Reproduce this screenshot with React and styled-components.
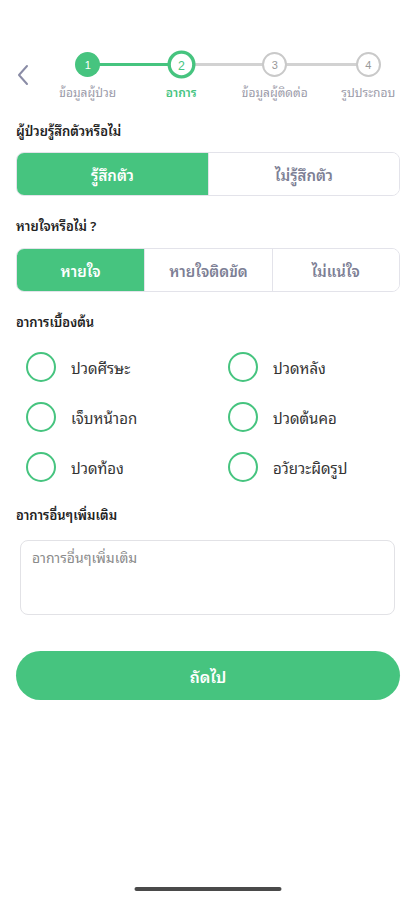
import React, { useState } from "react";
import styled, { createGlobalStyle } from "styled-components";

const GREEN = "#46c47f";
const FONT = `"Noto Sans Thai Looped", "Loma", "Garuda", "Norasi", "Noto Sans Thai", "Noto Sans", sans-serif`;

const Global = createGlobalStyle`
  html, body { margin: 0; padding: 0; background: #fff; }
  body { font-family: ${FONT}; color: #222; }
  * { box-sizing: border-box; }
`;

const Screen = styled.div`
  width: 415px;
  height: 900px;
  background: #fff;
  display: flex;
  flex-direction: column;
  padding: 0 15px 0 16px;
  position: relative;
`;

const Header = styled.div`
  display: flex;
  align-items: flex-start;
  padding-top: 52px;
  height: 108px;
  margin-right: -15px;
`;

const Back = styled.button`
  border: 0;
  background: none;
  padding: 0;
  width: 25px;
  flex-shrink: 0;
  margin-top: 12px;
  display: flex;
  cursor: pointer;
`;

const Steps = styled.div`
  flex: 1;
  display: grid;
  grid-template-columns: repeat(4, 1fr);
`;

const Step = styled.div`
  display: flex;
  flex-direction: column;
  align-items: center;
  position: relative;
  &::after {
    content: "";
    display: ${(p) => (p.$last ? "none" : "block")};
    position: absolute;
    top: 11px;
    left: 50%;
    width: 100%;
    height: 3px;
    background: ${(p) => (p.$lineDone ? GREEN : "#d2d2d2")};
    z-index: 0;
  }
`;

const Circle = styled.div`
  width: 25px;
  height: 25px;
  border-radius: 50%;
  z-index: 1;
  display: flex;
  align-items: center;
  justify-content: center;
  font-size: 11px;
  font-family: "Liberation Sans", Arial, sans-serif;
  background: ${(p) => (p.$state === "done" ? GREEN : "#fff")};
  color: ${(p) =>
    p.$state === "done" ? "#fff" : p.$state === "active" ? GREEN : "#999"};
  border: ${(p) =>
    p.$state === "active"
      ? `3px solid ${GREEN}`
      : p.$state === "done"
      ? "none"
      : "2px solid #c9c9c9"};
  transform: ${(p) => (p.$state === "active" ? "scale(1.12)" : "none")};
`;

const StepLabel = styled.div`
  margin-top: 5px;
  font-size: 12px;
  white-space: nowrap;
  color: ${(p) => (p.$active ? GREEN : "#9a9aa8")};
  font-weight: ${(p) => (p.$active ? 600 : 400)};
`;

const SectionTitle = styled.div`
  font-size: 13px;
  font-weight: 600;
  color: #222;
  margin: ${(p) => p.$m || "12px 0 10px"};
`;

const Segmented = styled.div`
  display: grid;
  grid-template-columns: repeat(${(p) => p.$n}, 1fr);
  height: 44px;
  border: 1px solid #e3e3ea;
  border-radius: 8px;
  overflow: hidden;
`;

const SegBtn = styled.button`
  border: 0;
  border-left: ${(p) => (p.$first ? "0" : "1px solid #e3e3ea")};
  background: ${(p) => (p.$on ? GREEN : "#fff")};
  color: ${(p) => (p.$on ? "#fff" : "#7d7f95")};
  font-family: ${FONT};
  font-size: 15px;
  font-weight: 600;
  cursor: pointer;
`;

const RadioGrid = styled.div`
  display: grid;
  grid-template-columns: 202px 1fr;
  row-gap: 20px;
  padding: 0 0 0 10px;
  margin-bottom: 22px;
`;

const RadioItem = styled.label`
  display: flex;
  align-items: center;
  gap: 15px;
  height: 30px;
  font-size: 15px;
  color: #333;
  cursor: pointer;
`;

const RadioCircle = styled.span`
  width: 30px;
  height: 30px;
  border-radius: 50%;
  border: 2px solid ${GREEN};
  flex-shrink: 0;
`;

const TextArea = styled.textarea`
  display: block;
  margin: 0 5px 0 4px;
  height: 75px;
  border: 1px solid #e2e2e6;
  border-radius: 8px;
  padding: 4px 11px;
  font-family: ${FONT};
  font-size: 14px;
  resize: none;
  color: #333;
  &::placeholder { color: #8a8a8a; }
`;

const NextBtn = styled.button`
  margin-top: 36px;
  height: 49px;
  border: 0;
  border-radius: 25px;
  background: ${GREEN};
  color: #fff;
  font-family: ${FONT};
  font-size: 16px;
  font-weight: 600;
  cursor: pointer;
`;

const HomeBar = styled.div`
  position: absolute;
  bottom: 9px;
  left: 50%;
  transform: translateX(-50%);
  width: 147px;
  height: 4px;
  border-radius: 2px;
  background: #4a4a4a;
`;

const steps = ["ข้อมูลผู้ป่วย", "อาการ", "ข้อมูลผู้ติดต่อ", "รูปประกอบ"];
const symptoms = [
  "ปวดศีรษะ",
  "ปวดหลัง",
  "เจ็บหน้าอก",
  "ปวดต้นคอ",
  "ปวดท้อง",
  "อวัยวะผิดรูป",
];

export default function App() {
  const [conscious, setConscious] = useState(0);
  const [breath, setBreath] = useState(0);
  return (
    <>
      <Global />
      <Screen>
        <Header>
          <Back aria-label="back">
            <svg width="14" height="22" viewBox="0 0 14 22">
              <path d="M11 2 L3 11 L11 20" fill="none" stroke="#8a8ca6" strokeWidth="2" strokeLinecap="round" strokeLinejoin="round" />
            </svg>
          </Back>
          <Steps>
            {steps.map((s, i) => (
              <Step key={s} $last={i === 3} $lineDone={i === 0}>
                <Circle $state={i === 0 ? "done" : i === 1 ? "active" : "todo"}>{i + 1}</Circle>
                <StepLabel $active={i === 1}>{s}</StepLabel>
              </Step>
            ))}
          </Steps>
        </Header>
        <SectionTitle $m="12px 0 11px">ผู้ป่วยรู้สึกตัวหรือไม่</SectionTitle>
        <Segmented $n={2}>
          {["รู้สึกตัว", "ไม่รู้สึกตัว"].map((t, i) => (
            <SegBtn key={t} $first={i === 0} $on={conscious === i} onClick={() => setConscious(i)}>{t}</SegBtn>
          ))}
        </Segmented>
        <SectionTitle $m="19px 0 12px">หายใจหรือไม่ ?</SectionTitle>
        <Segmented $n={3}>
          {["หายใจ", "หายใจติดขัด", "ไม่แน่ใจ"].map((t, i) => (
            <SegBtn key={t} $first={i === 0} $on={breath === i} onClick={() => setBreath(i)}>{t}</SegBtn>
          ))}
        </Segmented>
        <SectionTitle $m="19px 0 20px">อาการเบื้องต้น</SectionTitle>
        <RadioGrid>
          {symptoms.map((s) => (
            <RadioItem key={s}>
              <RadioCircle />
              {s}
            </RadioItem>
          ))}
        </RadioGrid>
        <SectionTitle $m="0 0 15px">อาการอื่นๆเพิ่มเติม</SectionTitle>
        <TextArea placeholder="อาการอื่นๆเพิ่มเติม" />
        <NextBtn>ถัดไป</NextBtn>
        <HomeBar />
      </Screen>
    </>
  );
}
